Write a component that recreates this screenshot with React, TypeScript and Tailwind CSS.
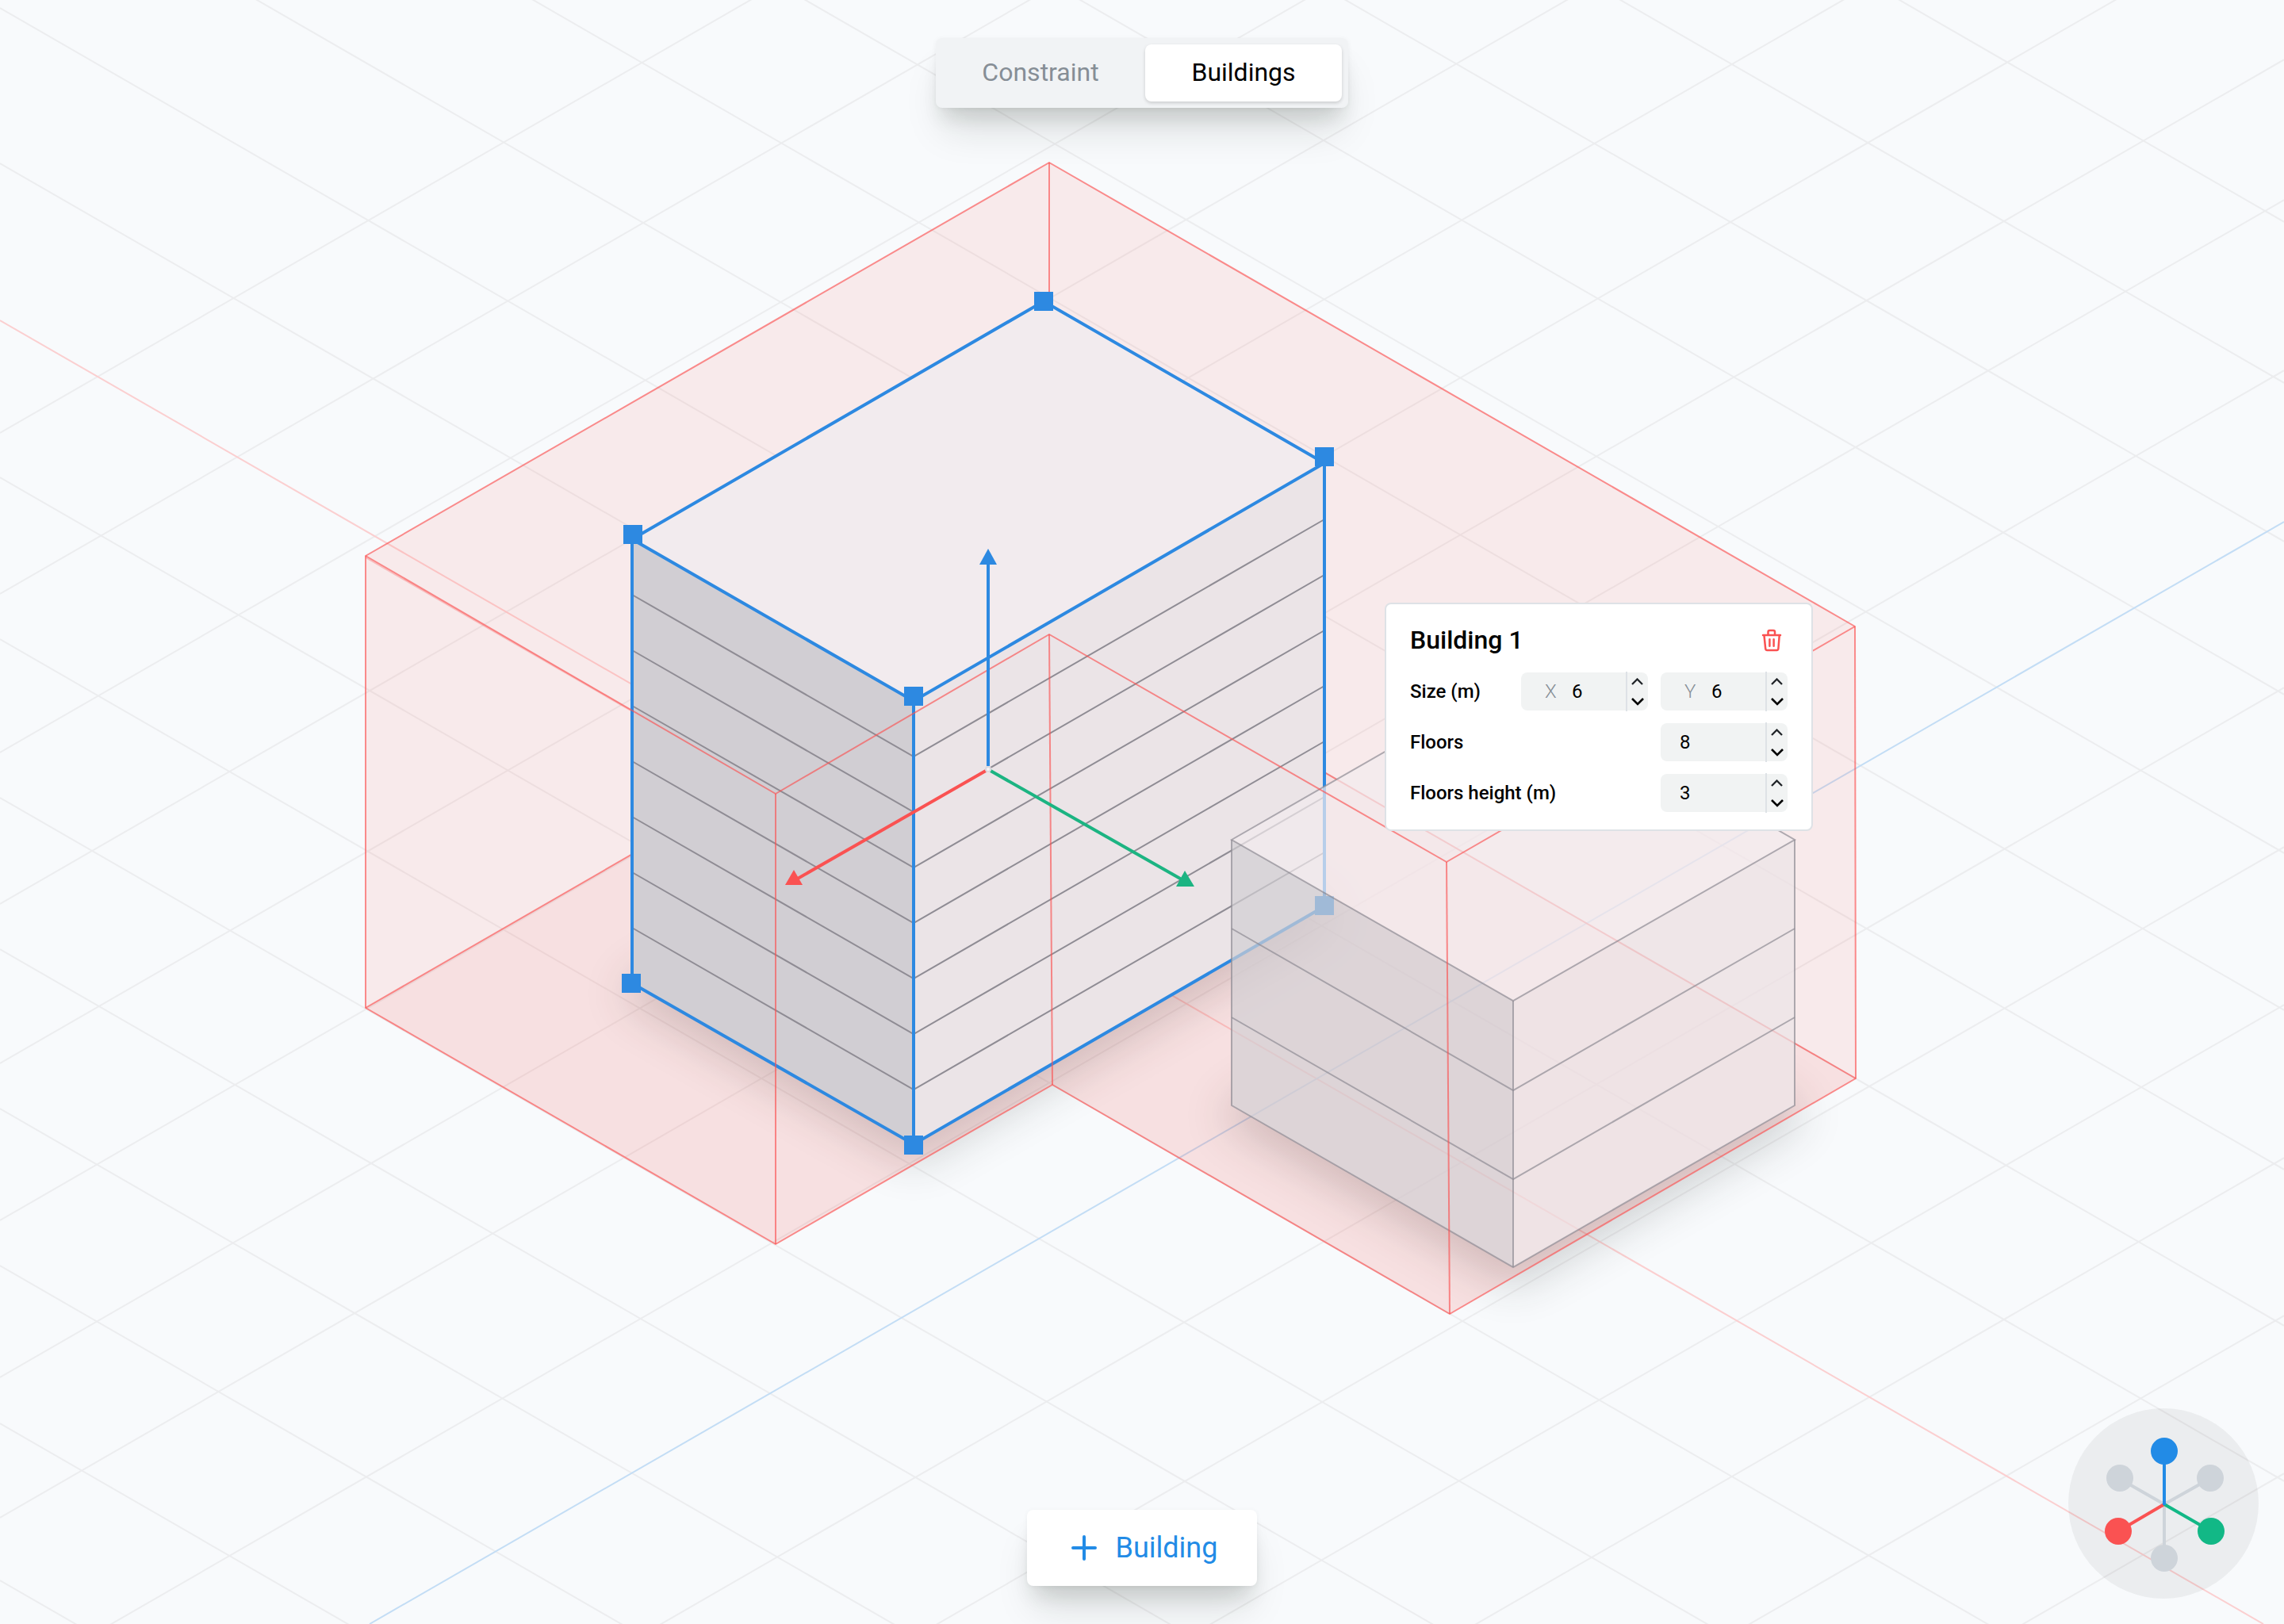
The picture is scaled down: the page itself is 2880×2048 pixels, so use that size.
import { useState } from "react";

const SLOPE = 0.577;
const DESCENDING = [-1382, -1179, -979, -786, -586, -388, -187, 10, 206, 602, 806, 1006, 1197, 1398, 1596, 1795, 1993];
const ASCENDING = [546, 749, 949, 1140, 1341, 1539, 1737, 1914, 2129, 2529, 2730, 2929, 3122, 3321, 3520];

const points = (list: number[][]) => list.map((p) => p.join(",")).join(" ");

const TALL_FLOORS = [1, 2, 3, 4, 5, 6, 7].map((n) => n * 70);
const TALL_TOP = [[797, 680], [1316, 380], [1670, 584], [1152, 884]];
const TALL_BASE = [[797, 1240], [1316, 940], [1670, 1143], [1152, 1443]];
const LOW_TOP = [[1553, 1059], [1908, 855], [2263, 1059], [1908, 1262]];
const LOW_BASE = [[1553, 1394], [1908, 1190], [2263, 1394], [1908, 1598]];
const HANDLES = [[1316, 380], [798, 674], [1670, 576], [1152, 878], [796, 1240], [1152, 1444], [1670, 1142]];

function Scene() {
  return (
    <svg
      className="absolute inset-0 h-full w-full"
      viewBox="0 0 2880 2048"
      preserveAspectRatio="xMidYMid slice"
      role="img"
      aria-label="Isometric view of the building site"
    >
      <defs>
        <filter id="soft" x="-30%" y="-30%" width="160%" height="160%" colorInterpolationFilters="sRGB">
          <feGaussianBlur stdDeviation="28" />
        </filter>
        <clipPath id="outside-low">
          <path clipRule="evenodd" d="M0 0H2880V2048H0ZM1553 1059 1908 855 2263 1059V1394L1908 1598 1553 1394Z" />
        </clipPath>
      </defs>

      <g stroke="#ecedef" strokeWidth="2">
        {DESCENDING.map((y) => (
          <line key={y} x1={0} y1={y} x2={2880} y2={y + 2880 * SLOPE} />
        ))}
        {ASCENDING.map((y) => (
          <line key={y} x1={0} y1={y} x2={2880} y2={y - 2880 * SLOPE} />
        ))}
      </g>
      <line x1="0" y1="404" x2="2854" y2="2048" stroke="#fbcfd0" strokeWidth="2" />
      <line x1="466" y1="2048" x2="2880" y2="658" stroke="#c3ddf5" strokeWidth="2" />

      <g fill="#262b28" stroke="#262b28" strokeWidth="24" strokeLinejoin="round">
        <g opacity="0.2">
          <polygon points={points(TALL_BASE)} transform="translate(0 12)" filter="url(#soft)" />
        </g>
        <g opacity="0.2" clipPath="url(#outside-low)">
          <polygon points={points(LOW_BASE)} transform="translate(0 12)" filter="url(#soft)" />
        </g>
      </g>

      <polygon
        points="461,701 1323,205 2339,790 2340,1360 1828,1657 1327,1368 978,1569 461,1271"
        fill="#fa5149"
        fillOpacity="0.095"
      />
      <polygon
        points="461,1271 1323,774 2340,1360 1828,1657 1327,1368 978,1569"
        fill="#ee4646"
        fillOpacity="0.06"
      />
      <g fill="none" stroke="#fa5252" strokeOpacity="0.65" strokeWidth="2">
        <polyline points="461,1271 1323,774 2340,1360" />
        <polyline points="1323,205 1323,774" />
        <polyline points="461,703 797,897" strokeOpacity="0.3" />
      </g>

      <polygon points={points(TALL_TOP)} fill="#f2ebee" />
      <polygon points="797,680 1152,884 1152,1443 797,1240" fill="#d1ced3" />
      <polygon points="1152,884 1670,584 1670,1143 1152,1443" fill="#ebe4e7" />
      <g fill="none" stroke="#8f8c94" strokeWidth="2">
        {TALL_FLOORS.map((d) => (
          <polyline key={d} points={points([[797, 680 + d], [1152, 884 + d], [1670, 585 + d]])} />
        ))}
      </g>
      <g fill="none" stroke="#2d89e1" strokeWidth="4">
        <polygon points={points(TALL_TOP)} />
        <polyline points="797,680 797,1240 1152,1443 1670,1143 1670,584" />
        <line x1="1152" y1="884" x2="1152" y2="1443" />
      </g>
      <g fill="#2d89e1">
        {HANDLES.map(([x, y]) => (
          <rect key={`${x}-${y}`} x={x - 12} y={y - 12} width="24" height="24" />
        ))}
      </g>

      <g fillOpacity="0.7" strokeOpacity="0.7">
        <polygon points={points(LOW_TOP)} fill="#f2ebee" />
        <polygon points="1553,1059 1908,1262 1908,1598 1553,1394" fill="#d1ced3" />
        <polygon points="1908,1262 2263,1059 2263,1394 1908,1598" fill="#ebe4e7" />
        <g fill="none" stroke="#8f8c94" strokeWidth="2">
          <polygon points={points(LOW_TOP)} />
          <polyline points="1553,1059 1553,1394 1908,1598 2263,1394 2263,1059" />
          <polyline points="1553,1171 1908,1375 2263,1171" />
          <polyline points="1553,1283 1908,1487 2263,1283" />
          <line x1="1908" y1="1262" x2="1908" y2="1598" />
        </g>
      </g>

      <g fill="none" stroke="#fa5252" strokeOpacity="0.65" strokeWidth="2" strokeLinejoin="round">
        <polygon points="461,701 1323,205 2339,790 2340,1360 1828,1657 1327,1368 978,1569 461,1271" />
        <polyline points="461,701 978,1001 1323,800 1824,1087 2339,790" />
        <line x1="978" y1="1001" x2="978" y2="1569" />
        <line x1="1323" y1="800" x2="1327" y2="1368" />
        <line x1="1824" y1="1087" x2="1828" y2="1657" />
      </g>

      <g strokeWidth="4">
        <line x1="1243" y1="972" x2="1004" y2="1109" stroke="#fa5252" />
        <line x1="1249" y1="972" x2="1490" y2="1109" stroke="#1cb482" />
        <line x1="1246" y1="966" x2="1246" y2="708" stroke="#2d89e1" />
      </g>
      <polygon points="1001,1097 1012,1116 990,1116" fill="#fa5252" />
      <polygon points="1494,1098 1506,1118 1483,1118" fill="#1cb482" />
      <polygon points="1246,692 1257,712 1235,712" fill="#2d89e1" />
      <circle cx="1246" cy="970" r="4" fill="#dbd8dd" />
      <circle cx="1246" cy="970" r="2" fill="#f6f4f6" />
    </svg>
  );
}

function Chevron({ down = false }: { down?: boolean }) {
  return (
    <svg
      className="h-2.5 w-4"
      viewBox="0 0 16 10"
      fill="none"
      stroke={down ? "#000" : "#212529"}
      strokeWidth={down ? 2.6 : 2.3}
      aria-hidden="true"
    >
      <path d={down ? "M1 1 8 8 15 1" : "M1 8 7.500 1.500 14 8"} />
    </svg>
  );
}

function NumberField({ id, label, prefix, initial }: { id: string; label: string; prefix?: string; initial: number }) {
  const [value, setValue] = useState(initial);
  return (
    <div className={prefix ? "flex h-12 w-40 items-center rounded-lg bg-[#f1f3f3] pl-[30px]" : "flex h-12 w-40 items-center rounded-lg bg-[#f1f3f3] pl-6"}>
      {prefix && (
        <label htmlFor={id} className="w-[34px] shrink-0 font-light text-[#868e96]">
          {prefix}
        </label>
      )}
      <input
        id={id}
        aria-label={label}
        inputMode="numeric"
        className="min-w-0 flex-1 bg-transparent font-normal text-black outline-none"
        value={value}
        onChange={(e) => setValue(Number(e.target.value) || 0)}
      />
      <div className="flex h-[50px] w-7 shrink-0 flex-col border-l-2 border-[#dee2e6]">
        <button type="button" aria-label={`Increase ${label}`} className="flex flex-1 items-center justify-center" onClick={() => setValue(value + 1)}>
          <Chevron />
        </button>
        <button type="button" aria-label={`Decrease ${label}`} className="flex flex-1 items-center justify-center" onClick={() => setValue(value - 1)}>
          <Chevron down />
        </button>
      </div>
    </div>
  );
}

function BuildingPanel() {
  return (
    <section className="absolute top-[760px] left-[1746px] flex w-[540px] flex-col gap-4 rounded-lg border-2 border-[#dee2e6] bg-white px-[30px] py-[22px] text-2xl font-medium text-black">
      <div className="flex h-12 items-center justify-between">
        <h2 className="pb-0.5 text-[32px] leading-10 font-medium">Building 1</h2>
        <button type="button" aria-label="Delete building" className="mr-1.5">
          <svg className="h-8 w-7" viewBox="0 0 28 32" fill="none" stroke="#fa5252" strokeWidth="2.500" strokeLinecap="round" strokeLinejoin="round">
            <path d="M3 9H25M9.500 9V5a2 2 0 0 1 2-2h4.500a2 2 0 0 1 2 2v4M4.500 9.500 6.200 26a2 2 0 0 0 2 1.900h12.200a2 2 0 0 0 2-1.900L23.700 9.500M11.400 14.300v8.400M16.600 14.300v8.400" />
          </svg>
        </button>
      </div>
      <div className="flex h-12 items-center">
        <span className="flex-1">Size (m)</span>
        <div className="flex gap-4">
          <NumberField id="size-x" label="Size X" prefix="X" initial={6} />
          <NumberField id="size-y" label="Size Y" prefix="Y" initial={6} />
        </div>
      </div>
      <div className="flex h-12 items-center justify-between">
        <label htmlFor="floors">Floors</label>
        <NumberField id="floors" label="Floors" initial={8} />
      </div>
      <div className="flex h-12 items-center justify-between">
        <label htmlFor="floors-height">Floors height (m)</label>
        <NumberField id="floors-height" label="Floors height (m)" initial={3} />
      </div>
    </section>
  );
}

function ViewCompass() {
  return (
    <button type="button" aria-label="Change view direction" className="absolute right-8 bottom-8 h-60 w-60 rounded-full bg-black/5">
      <svg className="h-full w-full" viewBox="0 0 240 240" strokeWidth="4">
        <g stroke="#ced4da" fill="#ced4da">
          <path d="M121 121 65 89M121 121 178 89M121 121V189" />
          <g stroke="none">
            <circle cx="65" cy="88" r="17" />
            <circle cx="179" cy="88" r="17" />
            <circle cx="121" cy="189" r="17" />
          </g>
        </g>
        <path d="M121 121 63 155" stroke="#fa5252" />
        <path d="M121 121 180 155" stroke="#12b886" />
        <path d="M121 122V54" stroke="#228be6" />
        <circle cx="63" cy="155" r="17" fill="#fa5252" />
        <circle cx="180" cy="155" r="17" fill="#12b886" />
        <circle cx="121" cy="54" r="17" fill="#228be6" />
      </svg>
    </button>
  );
}

export default function App() {
  const [mode, setMode] = useState("Buildings");
  return (
    <main className="relative flex min-h-screen flex-col items-center justify-between overflow-hidden bg-[#f8fafc] py-12 font-['Roboto',sans-serif]">
      <Scene />
      <nav aria-label="Editing mode" className="relative flex gap-2 rounded-lg bg-[#f1f3f5] p-2 shadow-[0_1px_6px_rgba(0,0,0,0.05),0_36px_50px_-10px_rgba(20,30,20,0.13),0_20px_24px_-8px_rgba(20,30,20,0.12)]">
        {["Constraint", "Buildings"].map((name) => (
          <button
            key={name}
            type="button"
            aria-pressed={mode === name}
            onClick={() => setMode(name)}
            className={
              mode === name
                ? "h-[72px] w-62 rounded-lg bg-white pb-0.5 text-[32px] text-black shadow-[0_2px_4px_rgba(0,0,0,0.16)]"
                : "h-[72px] w-62 rounded-lg pb-0.5 text-[32px] text-[#868e96]"
            }
          >
            {name}
          </button>
        ))}
      </nav>
      <BuildingPanel />
      <button
        type="button"
        className="relative flex h-24 items-center gap-6 rounded-lg bg-white pr-[50px] pl-14 text-4xl text-[#228be6] shadow-[0_1px_6px_rgba(0,0,0,0.05),0_36px_50px_-10px_rgba(20,30,20,0.13),0_20px_24px_-8px_rgba(20,30,20,0.12)]"
      >
        <svg className="h-8 w-8" viewBox="0 0 32 32" stroke="currentColor" strokeWidth="4" strokeLinecap="round" aria-hidden="true">
          <path d="M16 2V30M2 16H30" />
        </svg>
        Building
      </button>
      <ViewCompass />
    </main>
  );
}
